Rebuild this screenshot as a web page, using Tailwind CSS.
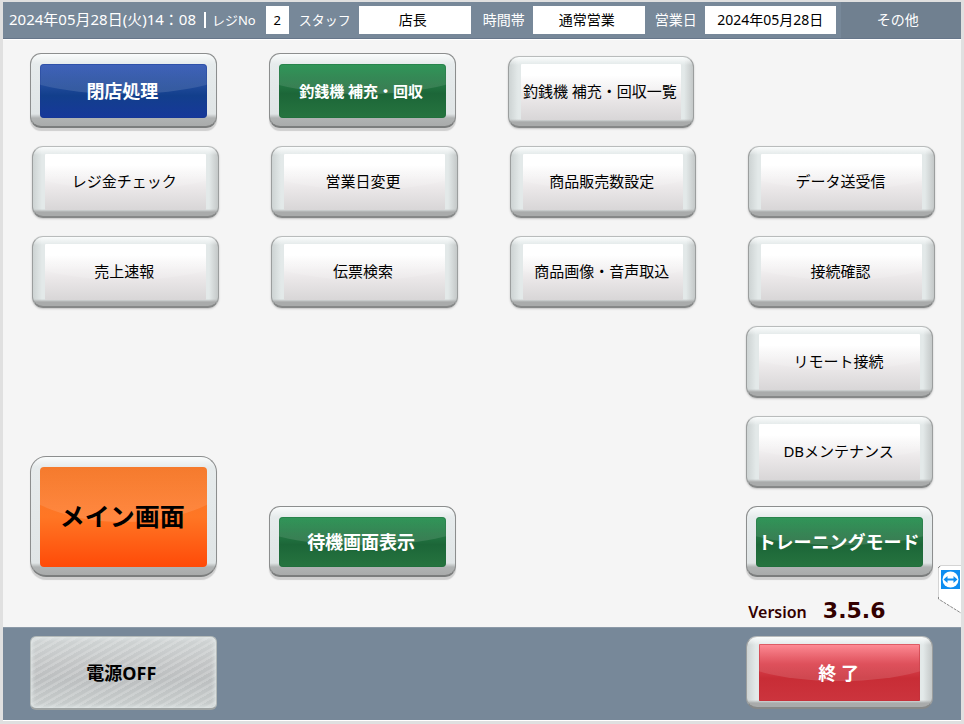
<!DOCTYPE html>
<html lang="ja">

<head>
  <meta charset="UTF-8">
  <meta name="viewport" content="width=device-width, initial-scale=1.0">
  <title>レジ その他</title>
  <script src="https://cdn.jsdelivr.net/npm/@tailwindcss/browser@4"></script>
  <style>
    body {
      font-family: "Noto Sans", "Noto Sans CJK JP", sans-serif;
    }

    /* raised bezel shared by all the keys */
    .key {
      position: relative;
      display: flex;
      border: 1px solid #8c8e8e;
      border-bottom: 2px solid #7b7d7d;
      border-radius: 11px;
      background: linear-gradient(to bottom, #fafcfc 0, #e6ebec 10px, #e0e5e6 calc(100% - 12px), #b0b3b3 calc(100% - 8px), #a9abab 100%);
      box-shadow: 0 3px 1px #cfcfcf;
      padding: 10px 9px 8px;
    }

    .key-large {
      border-radius: 16px;
    }

    .key-gray {
      border-color: #b9bcbc #9b9e9e #868888;
      box-shadow: 0 1px 2px #c4c4c4;
      padding: 7px 12px 6px;
      background:
        linear-gradient(to bottom, #fafcfc 0, #fafcfc00 8px, #b0b3b300 calc(100% - 7px), #a9abab calc(100% - 4px)),
        linear-gradient(to right, #cdd3d3 0, #e3e9e9 9px, #e3e9e9 calc(100% - 9px), #c4c8c8 100%);
    }

    .face {
      position: relative;
      display: flex;
      flex: 1;
      align-items: center;
      justify-content: center;
      overflow: hidden;
      border-radius: 4px;
      padding-right: 2px;
      white-space: nowrap;
    }

    .key-gray .face {
      border-radius: 1px;
    }

    /* curved highlight on the upper half */
    .face::before {
      content: "";
      position: absolute;
      left: -20%;
      right: -20%;
      top: -60%;
      height: 115%;
      border-radius: 50%;
      background: linear-gradient(to bottom, #ffffff00 50%, #ffffff24);
    }

    .face span {
      position: relative;
    }

    .face-blue {
      background: linear-gradient(#3f62ba, #123f8c 58%, #17389a);
      box-shadow: inset 0 0 0 1px #17379066;
    }

    .face-green {
      background: linear-gradient(#2f9658, #1c6638 55%, #26743f);
      box-shadow: inset 0 0 0 1px #1b6a3a66;
    }

    .face-orange {
      background: linear-gradient(#f57a2c, #ff7624 50%, #ff4a08);
    }

    .face-red {
      background: linear-gradient(#ff8f98, #dc4450 35%, #c82d36 60%, #cc343d);
      box-shadow: inset 0 0 0 1px #c0303a88;
    }

    .face-white {
      padding-bottom: 2px;
      background: linear-gradient(#ffffff 20%, #ebe8e9 60%, #d8d6d7);
    }

    .face-red::before,
    .face-white::before {
      top: -50%;
      background: linear-gradient(to bottom, #ffffff00 50%, #ffffff24);
    }

    .hatched {
      border: 1px solid #b4bab9;
      border-bottom: 2px solid #9ea3a3;
      box-shadow: inset 0 0 4px 1px #e4eaea;
      background:
        repeating-linear-gradient(150deg, #ffffff00 0, #ffffff00 3px, #ffffff30 4px, #ffffff30 6px),
        linear-gradient(#d0d5d5, #c2c4c5 40%, #bcbfc0 60%, #c8cdcd);
    }

    footer .key {
      box-shadow: none;
    }
  </style>
</head>

<body class="flex min-h-screen flex-col border-3 border-t-2 border-[#e0e0e0] bg-[#f5f5f5] text-black">
  <header class="flex h-[37px] items-center border-b border-[#66768a] bg-[#778899] text-sm text-white">
    <time class="ml-[6px] text-[15px]">2024年05月28日(火)14：08</time>
    <span class="ml-2 h-4 w-[2px] bg-white"></span>
    <label for="register" class="ml-[6px] text-[13px]">レジNo</label>
    <input id="register" type="text" value="2" readonly class="ml-[10px] h-7 w-[23px] bg-white text-center text-[13px] text-black">
    <label for="staff" class="ml-[10px] text-[13px]">スタッフ</label>
    <input id="staff" type="text" value="店長" readonly class="ml-2 h-7 w-[112px] bg-white pr-1 pb-[2px] text-center text-black">
    <label for="period" class="ml-3">時間帯</label>
    <input id="period" type="text" value="通常営業" readonly class="ml-2 h-7 w-[112px] bg-white pr-1 pb-[2px] text-center text-black">
    <label for="bizday" class="ml-[10px]">営業日</label>
    <input id="bizday" type="text" value="2024年05月28日" readonly class="ml-2 h-7 w-[131px] bg-white pb-[2px] text-center text-black">
    <button type="button" class="ml-[5px] h-full flex-1 bg-[#708090] pr-[6px] text-sm">その他</button>
  </header>

  <main class="relative flex flex-1 flex-col border-t border-white pt-[13px] text-[15px]">
    <section class="grid grid-cols-4 gap-x-[52px] pr-[28px] pl-[27px]">
      <button type="button" class="key h-[75px]"><span class="face face-blue text-lg font-bold text-white"><span>閉店処理</span></span></button>
      <button type="button" class="key h-[75px]"><span class="face face-green text-[15px] font-bold text-white"><span>釣銭機 補充・回収</span></span></button>
      <button type="button" class="key key-gray mt-[3px] h-[72px]"><span class="face face-white"><span>釣銭機 補充・回収一覧</span></span></button>
    </section>

    <section class="mt-[18px] grid grid-cols-4 gap-x-[52px] gap-y-[18px] pr-[26px] pl-[29px]">
      <button type="button" class="key key-gray h-[72px]"><span class="face face-white"><span>レジ金チェック</span></span></button>
      <button type="button" class="key key-gray h-[72px]"><span class="face face-white"><span>営業日変更</span></span></button>
      <button type="button" class="key key-gray h-[72px]"><span class="face face-white"><span>商品販売数設定</span></span></button>
      <button type="button" class="key key-gray h-[72px]"><span class="face face-white"><span>データ送受信</span></span></button>
      <button type="button" class="key key-gray h-[72px]"><span class="face face-white"><span>売上速報</span></span></button>
      <button type="button" class="key key-gray h-[72px]"><span class="face face-white"><span>伝票検索</span></span></button>
      <button type="button" class="key key-gray h-[72px]"><span class="face face-white"><span>商品画像・音声取込</span></span></button>
      <button type="button" class="key key-gray h-[72px]"><span class="face face-white"><span>接続確認</span></span></button>
    </section>

    <section class="mt-[18px] grid grid-cols-4 items-end gap-x-[52px] pr-[28px] pl-[27px]">
      <button type="button" class="key key-large h-[121px]"><span class="face face-orange text-[25px] font-bold"><span>メイン画面</span></span></button>
      <button type="button" class="key h-[71px]"><span class="face face-green text-lg font-bold text-white"><span>待機画面表示</span></span></button>
      <div class="col-start-4 flex flex-col gap-[18px]">
        <button type="button" class="key key-gray h-[72px]"><span class="face face-white"><span>リモート接続</span></span></button>
        <button type="button" class="key key-gray h-[72px]"><span class="face face-white"><span>DBメンテナンス</span></span></button>
        <button type="button" class="key h-[71px]"><span class="face face-green text-lg font-bold text-white"><span>トレーニングモード</span></span></button>
      </div>
    </section>

    <p class="mt-[22px] grid grid-cols-4 gap-x-[52px] pr-[28px] pl-[27px] font-semibold text-[#330000]">
      <span class="col-start-4 flex items-baseline gap-4 pl-[2px] text-base leading-6">Version <span class="font-['DejaVu_Sans'] text-[22px] leading-6 font-bold">3.5.6</span></span>
    </p>

    <!-- remote support tab, hangs on the right edge -->
    <a href="#" aria-label="リモートサポート" class="absolute right-0 bottom-[12px]">
      <svg width="23" height="50" viewBox="0 0 23 50">
        <path d="M23 0H3L0 3V34L23 48Z" fill="#fff" />
        <path d="M23 .5H3L.5 3V34" fill="none" stroke="#d4d4d4" />
        <path d="M0 3L3 0M.5 32V34L23 48" fill="none" stroke="#888" stroke-dasharray="3 1" />
        <rect x="3" y="5" width="19" height="19" fill="#0f8df0" />
        <circle cx="12.500" cy="14.500" r="8" fill="#fff" />
        <path d="M5.500 14.500l4-3.500v2.500h6V11l4 3.500L15.500 18v-2.500h-6V18z" fill="#0f8df0" />
      </svg>
    </a>
  </main>

  <footer class="grid h-[93px] grid-cols-4 gap-x-[52px] border-t border-[#8c9aa8] bg-[#778899] pt-2 pr-[28px] pl-[27px]">
    <button type="button" class="hatched h-[74px] rounded-md pr-1 text-lg font-bold">電源OFF</button>
    <button type="button" class="key key-gray col-start-4 h-[73px]"><span class="face face-red text-lg font-bold text-white"><span>終 了</span></span></button>
  </footer>
  <div class="h-px bg-white"></div>
</body>

</html>
